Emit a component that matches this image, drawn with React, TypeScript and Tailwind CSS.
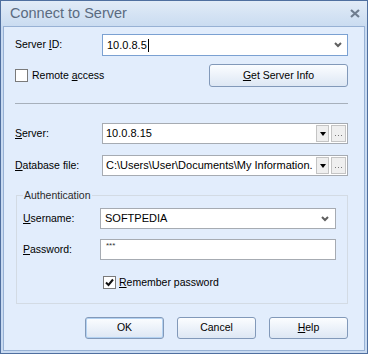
import React from 'react';

// underline one letter of a label, Windows accelerator style
function Acc({ text, at }: { text: string; at: number }) {
  return (
    <>
      {text.slice(0, at)}
      <span className="underline underline-offset-[1px]">{text[at]}</span>
      {text.slice(at + 1)}
    </>
  );
}

function Chevron() {
  return (
    <svg width="8" height="6" viewBox="0 0 8 6" className="shrink-0">
      <path d="M1 1 L4 4 L7 1" fill="none" stroke="#5f5f5f" strokeWidth="2" />
    </svg>
  );
}

function MiniButtons() {
  return (
    <div className="flex h-full items-center gap-[2px] pr-[1px]">
      <div className="flex h-[17px] w-[13px] items-center justify-center border border-[#c4c4c4] bg-[#efefef]">
        <svg width="6" height="4" viewBox="0 0 6 4">
          <path d="M0 0 H6 L3 4 Z" fill="#000" />
        </svg>
      </div>
      <div className="flex h-[17px] w-[15px] items-end justify-center border border-[#c4c4c4] bg-[#efefef] pb-[5px]">
        <svg width="7" height="1" viewBox="0 0 7 1">
          <rect x="0" y="0" width="1" height="1" fill="#777" />
          <rect x="3" y="0" width="1" height="1" fill="#777" />
          <rect x="6" y="0" width="1" height="1" fill="#777" />
        </svg>
      </div>
    </div>
  );
}

function CheckBox({ checked }: { checked?: boolean }) {
  return (
    <div className="flex h-[13px] w-[13px] shrink-0 items-center justify-center border border-[#7a7a7a] bg-white">
      {checked && (
        <svg width="9" height="9" viewBox="0 0 9 9">
          <path d="M1 4.5 L3.5 7 L8 1.5" fill="none" stroke="#111" strokeWidth="2" />
        </svg>
      )}
    </div>
  );
}

const btn =
  'flex h-[22px] w-[79px] items-center justify-center rounded-[3px] border border-[#8299b9] bg-gradient-to-b from-[#fbfdff] to-[#dde7f4] text-black';

export default function App() {
  return (
    <div className="flex h-[354px] w-[368px] flex-col border border-[#4f6f9f] bg-[#c8daf1] font-['Liberation_Sans',Arial,sans-serif] text-[10.5px] text-black">
      {/* title bar */}
      <div className="flex h-[25px] shrink-0 items-center justify-between bg-gradient-to-b from-[#e1ebf7] to-[#cadcf1] pl-[9px] pr-[6px]">
        <span className="text-[14.5px] text-[#5b6b80]">Connect to Server</span>
        <svg width="10" height="9" viewBox="0 0 10 9" className="mr-[1px]">
          <path d="M1 1 L9 8 M9 1 L1 8" stroke="#6f7d8f" strokeWidth="2.2" />
        </svg>
      </div>

      {/* client */}
      <div className="mx-[2px] mb-[2px] flex flex-1 flex-col border border-[#97b1d4] bg-[#e2edfc] pl-[11px] pr-[16px] pt-[7px]">
        {/* server id */}
        <div className="flex h-[22px] items-center">
          <span className="w-[87px]">
            Server <Acc text="ID:" at={0} />
          </span>
          <div className="flex h-[22px] flex-1 items-center border border-[#7ba1d2] bg-white pl-[4px] pr-[5px]">
            <span className="text-[11px]">10.0.8.5</span>
            <span className="ml-[1px] h-[13px] w-[1px] bg-black" />
            <span className="flex-1" />
            <Chevron />
          </div>
        </div>

        {/* remote access + get info */}
        <div className="mt-[8px] flex h-[23px] items-center justify-between">
          <div className="flex items-center gap-[4px]">
            <CheckBox />
            <span>
              Remote <Acc text="access" at={0} />
            </span>
          </div>
          <div className={btn + ' w-[139px] h-[23px]'}>
            <span>
              <Acc text="Get Server Info" at={0} />
            </span>
          </div>
        </div>

        <div className="mt-[16px] border-t border-[#a7b0bb]" />

        {/* server */}
        <div className="mt-[19px] flex h-[21px] items-center">
          <span className="w-[87px]">
            <Acc text="Server:" at={0} />
          </span>
          <div className="flex h-[21px] flex-1 items-center border border-[#a6abb2] bg-white pl-[3px]">
            <span className="flex-1 text-[11px]">10.0.8.15</span>
            <MiniButtons />
          </div>
        </div>

        {/* database file */}
        <div className="mt-[11px] flex h-[21px] items-center">
          <span className="w-[87px]">
            <Acc text="Database file:" at={0} />
          </span>
          <div className="flex h-[21px] flex-1 items-center border border-[#a6abb2] bg-white pl-[3px]">
            <span className="flex-1 overflow-hidden whitespace-nowrap text-[11px]">
              C:\Users\User\Documents\My Information.
            </span>
            <MiniButtons />
          </div>
        </div>

        {/* authentication group */}
        <div className="relative ml-[1px] mt-[19px] flex h-[109px] flex-col border border-[#d3dbe4] pl-[6px] pr-[11px] pt-[12px]">
          <span className="absolute left-[6px] top-[-8px] bg-[#e2edfc] px-[1px] text-[#2a2a2a]">
            Authentication
          </span>
          <div className="flex h-[21px] items-center">
            <span className="w-[77px]">
              <Acc text="Username:" at={0} />
            </span>
            <div className="flex h-[21px] flex-1 items-center border border-[#a6abb2] bg-white pl-[4px] pr-[6px]">
              <span className="flex-1 text-[11px]">SOFTPEDIA</span>
              <Chevron />
            </div>
          </div>
          <div className="mt-[10px] flex h-[21px] items-center">
            <span className="w-[77px]">
              <Acc text="Password:" at={0} />
            </span>
            <div className="flex h-[21px] flex-1 items-start border border-[#a6abb2] bg-white pl-[5px] pt-[1px]">
              <span className="text-[8px] leading-[9px] text-[#333]">***</span>
            </div>
          </div>
          <div className="mt-[15px] flex items-center gap-[3px] pl-[80px]">
            <CheckBox checked />
            <span>
              <Acc text="Remember password" at={0} />
            </span>
          </div>
        </div>

        {/* buttons */}
        <div className="mt-[13px] flex justify-end gap-[13px] pr-[0px]">
          <div className={btn + ' border-[#5f8fcc] shadow-[inset_0_0_0_1px_#b3d2f2]'}>OK</div>
          <div className={btn}>Cancel</div>
          <div className={btn}>
            <span>
              <Acc text="Help" at={0} />
            </span>
          </div>
        </div>
      </div>
    </div>
  );
}
